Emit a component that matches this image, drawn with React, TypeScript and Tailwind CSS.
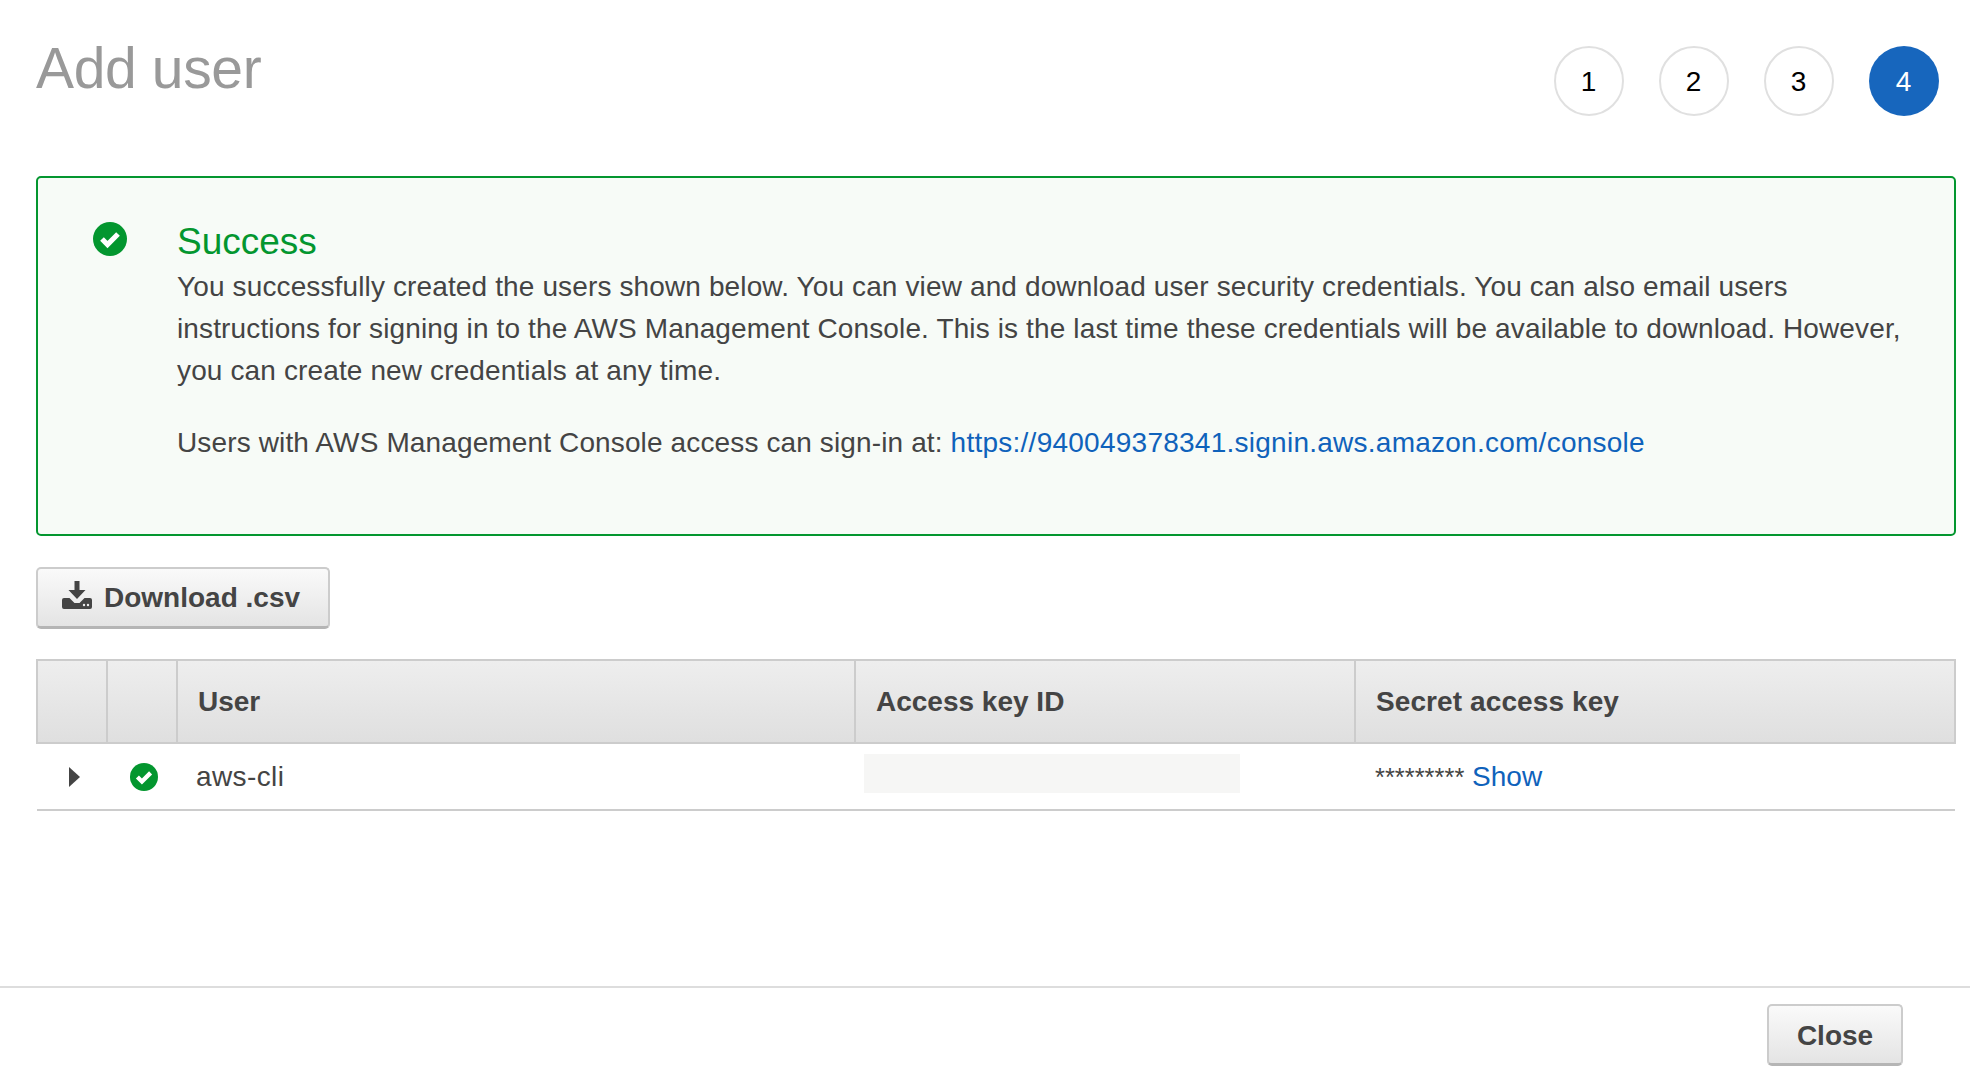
import React from 'react';

const steps = [1, 2, 3, 4];

function CheckCircle({ size }: { size: number }) {
  return (
    <svg width={size} height={size} viewBox="0 0 34 34" className="shrink-0">
      <circle cx="17" cy="17" r="17" fill="#03962f" />
      <path d="M9 17l5.500 5.500L25 12" fill="none" stroke="#fff" strokeWidth="5.200" />
    </svg>
  );
}

function DownloadIcon() {
  return (
    <svg width="30" height="28" viewBox="0 0 30 28" className="mb-[6px] shrink-0">
      <path d="M12.500 0h5v9h6L15 18 6.500 9h6z" fill="#444" />
      <path d="M2 17h5.500l5 5h5l5-5H28q2 0 2 2v7q0 2-2 2H2q-2 0-2-2v-7q0-2 2-2z" fill="#444" />
      <circle cx="22" cy="24" r="1.200" fill="#eee" />
      <circle cx="26" cy="24" r="1.200" fill="#eee" />
    </svg>
  );
}

export default function App() {
  return (
    <div className="flex h-[1078px] w-[1970px] flex-col overflow-hidden bg-white font-['Liberation_Sans',Arial,sans-serif] text-[#444]">
      <div className="flex-1 pl-9 pr-3.5">
        {/* Title and steps */}
        <div className="flex h-[176px] items-start justify-between">
          <h1 className="mt-[34px] text-[57px] leading-[68px] tracking-[-0.35px] text-[#999]">Add user</h1>
          <div className="mr-[17px] mt-[46px] flex gap-[35px]">
            {steps.map((step) => (
              <div
                key={step}
                className={`flex h-[70px] w-[70px] items-center justify-center rounded-full pr-[1px] pt-[2px] text-[28px] ${
                  step === 4 ? 'bg-[#1766bd] text-white' : 'border-2 border-[#e0e0e0] text-black'
                }`}
              >
                {step}
              </div>
            ))}
          </div>
        </div>

        {/* Success box */}
        <div className="flex h-[360px] rounded-[5px] border-2 border-[#03962f] bg-[#f7fbf7] pl-[55px] pt-[44px]">
          <CheckCircle size={34} />
          <div className="ml-[50px]">
            <div className="mb-[4px] text-[37px] leading-[40px] text-[#03962f]">Success</div>
            <p className="w-[1740px] text-[28px] leading-[42px] tracking-[0.13px]">
              You successfully created the users shown below. You can view and download user security credentials. You can also email users instructions for signing in to the AWS Management Console. This is the last time these credentials will be available to download. However, you can create new credentials at any time.
            </p>
            <p className="mt-[30px] text-[28px] leading-[42px] tracking-[0.13px]">
              Users with AWS Management Console access can sign-in at:{' '}
              <a className="tracking-[0.25px] text-[#0f62bb]">https://940049378341.signin.aws.amazon.com/console</a>
            </p>
          </div>
        </div>

        {/* Download button */}
        <button className="mt-[31px] flex h-[62px] w-[294px] items-center gap-[12px] rounded-[5px] border-2 border-b-[3px] border-[#ccc] border-b-[#b5b5b5] bg-gradient-to-b from-[#fafafa] to-[#e4e4e4] pl-[24px] text-[28px] font-bold text-[#444]">
          <DownloadIcon />
          Download .csv
        </button>

        {/* Users table */}
        <table className="mt-[30px] w-[1920px] table-fixed border-collapse">
          <thead>
            <tr className="h-[83px] bg-gradient-to-b from-[#eeeeee] to-[#dfdfdf] text-left text-[28px] font-bold">
              <th className="w-[70px] border-2 border-[#ccc]" />
              <th className="w-[70px] border-2 border-[#ccc]" />
              <th className="w-[678px] border-2 border-[#ccc] pl-[20px]">User</th>
              <th className="w-[500px] border-2 border-[#ccc] pl-[20px]">Access key ID</th>
              <th className="border-2 border-[#ccc] pl-[20px] tracking-[0.1px]">Secret access key</th>
            </tr>
          </thead>
          <tbody>
            <tr className="h-[67px] border-b-2 border-[#ccc] text-[28px]">
              <td>
                <svg width="11" height="20" viewBox="0 0 11 20" className="ml-[32px]">
                  <path d="M0 0l11 10L0 20z" fill="#444" />
                </svg>
              </td>
              <td>
                <div className="ml-[23px]">
                  <CheckCircle size={28} />
                </div>
              </td>
              <td className="pl-[19px] tracking-[0.4px]">aws-cli</td>
              <td className="pl-[9px]">
                <div className="mb-[6px] h-[39px] w-[376px] bg-[#f6f6f5]" />
              </td>
              <td className="pl-[20px]">
                <span className="text-[25.5px]">*********</span> <a className="text-[#0f62bb]">Show</a>
              </td>
            </tr>
          </tbody>
        </table>
      </div>

      {/* Footer */}
      <div className="flex h-[92px] items-start justify-end border-t-2 border-[#ddd] pr-[67px] pt-[16px]">
        <button className="h-[62px] w-[136px] rounded-[5px] border-2 border-b-[3px] border-[#ccc] border-b-[#b5b5b5] bg-gradient-to-b from-[#fafafa] to-[#e4e4e4] pt-[2px] text-[28px] font-bold text-[#444]">
          Close
        </button>
      </div>
    </div>
  );
}
